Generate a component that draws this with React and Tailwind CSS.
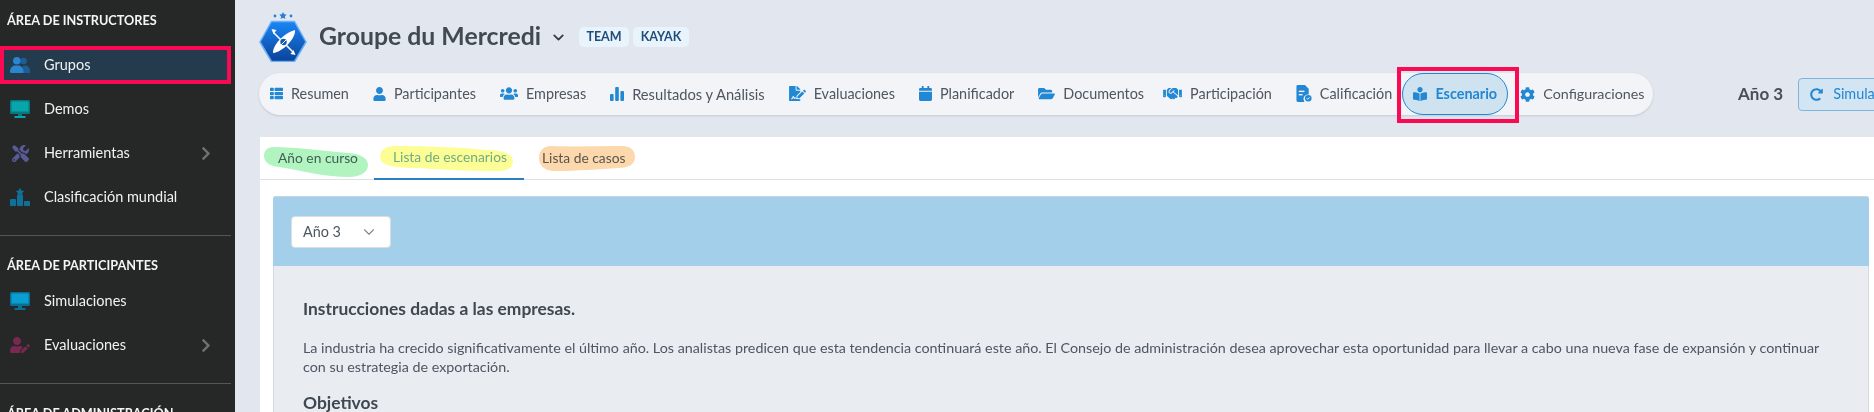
import React from "react";
import { FaTools, FaChevronRight, FaUserEdit, FaThList, FaUser, FaUsers, FaFileSignature, FaCalendar, FaFolderOpen, FaHandshake, FaBookReader, FaCog, FaRedoAlt } from "react-icons/fa";
import { ChevronDown } from "lucide-react";

function Ranking() {
  return (
    <svg viewBox="0 0 20 18" className="w-5 h-[18px]" fill="#0f7199">
      <rect x="0" y="11" width="6" height="7" rx="0.8" />
      <rect x="7" y="7" width="6" height="11" rx="0.8" />
      <rect x="14" y="13" width="6" height="5" rx="0.8" />
      <path d="M10 0l1.400 2.600 2.800.4-2 2 .5 2.800L10 6.500 7.300 7.800l.5-2.800-2-2 2.800-.4z" />
    </svg>
  );
}

function Duo() {
  return (
    <svg viewBox="0 0 20 16" className="w-5 h-4">
      <circle cx="13.500" cy="4" r="3.300" fill="#1d5f94" />
      <path d="M12 16v-4.500c0-1.500 1-3 3-3 3.200 0 5 2.500 5 5.500v2z" fill="#1d5f94" />
      <circle cx="6.800" cy="3.800" r="3.800" fill="#2a86cf" />
      <path d="M0 14.500C0 11 2.500 8.500 5 8.500h3.500c2.500 0 5 2.500 5 6V16H1.300C.5 16 0 15.400 0 14.500z" fill="#2a86cf" />
    </svg>
  );
}

function Monitor({ bezel, screen, stand }) {
  return (
    <svg viewBox="0 0 20 18" className="w-5 h-[18px]">
      <rect x="0" y="0" width="20" height="14" rx="1.500" fill={bezel} />
      <rect x="1.500" y="1.500" width="17" height="10" fill={screen} />
      <rect x="8" y="14" width="4" height="2" fill={bezel} />
      <rect x="4.500" y="16" width="11" height="2" fill={stand} />
    </svg>
  );
}

function Bars() {
  return (
    <svg viewBox="0 0 14 14" className="w-[14px] h-[14px]" fill="#2288d4">
      <rect x="0" y="7" width="3.600" height="7" rx="1" />
      <rect x="5.200" y="0" width="3.600" height="14" rx="1" />
      <rect x="10.400" y="4" width="3.600" height="10" rx="1" />
    </svg>
  );
}

function Grade() {
  return (
    <svg viewBox="0 0 16 18" className="w-4 h-[17px]">
      <path d="M1.500 0H9l4 4v6a5 5 0 0 0-4.600 8H1.500A1.500 1.500 0 0 1 0 16.500V1.500A1.500 1.500 0 0 1 1.500 0z" fill="#2288d4" />
      <rect x="2.500" y="6" width="6" height="1.500" fill="#f3f4f7" />
      <rect x="2.500" y="9.500" width="4" height="1.500" fill="#f3f4f7" />
      <circle cx="12.500" cy="14" r="3.500" fill="#2288d4" />
      <path d="M10.800 14l1.200 1.200 2-2.200" stroke="#f3f4f7" strokeWidth="1" fill="none" />
    </svg>
  );
}

function Logo() {
  return (
    <svg viewBox="0 0 48 50" className="w-12 h-[50px] shrink-0">
      <defs>
        <linearGradient id="hex" x1="0" y1="0" x2="0" y2="1">
          <stop offset="0" stopColor="#1b86f5" />
          <stop offset="1" stopColor="#0a4299" />
        </linearGradient>
      </defs>
      <path d="M24 0l1.200 2.300 2.500.3-1.800 1.800.4 2.500L24 5.700l-2.300 1.200.4-2.500-1.800-1.800 2.500-.3z" fill="#2a7fd6" />
      <circle cx="16" cy="4" r="1.400" fill="#2a7fd6" />
      <circle cx="32" cy="4" r="1.400" fill="#2a7fd6" />
      <path d="M12.500 9.500h23L47 30 35.500 49.500h-23L1 30z" fill="url(#hex)" stroke="#68b1f7" strokeWidth="1.500" strokeLinejoin="round" />
      <path d="M14 41c-.5-8 11-20 22-23 1 8-12 22-22 23z" fill="#ffffff" />
      <path d="M15 21l19 19" stroke="#ffffff" strokeWidth="1.600" strokeLinecap="round" />
      <path d="M12.500 17l5 1-3 4z M36.500 43l-5-1 3-4z" fill="#ffffff" />
      <circle cx="24.500" cy="30" r="3.200" fill="#0f5cb5" />
      <path d="M22 33l5-5" stroke="#ffffff" strokeWidth="1" />
    </svg>
  );
}

function SideRow({ icon, label, chevron }) {
  return (
    <div className="h-11 flex items-center pl-[10px] pr-[20px] w-[231px]">
      <span className="w-5 mr-[14px] flex justify-center">{icon}</span>
      <span className="flex-1 text-[14.500px] text-[#f1f1f1]">{label}</span>
      {chevron && <FaChevronRight className="text-[#6f7172] w-[10px] h-[15px]" />}
    </div>
  );
}

function Heading({ children, first }) {
  return (
    <div className={first ? "h-[43px] pt-[11px] pl-[7px] text-[12.700px] leading-[18px] font-bold text-[#f5f5f5] uppercase" : "h-[43px] pt-[20px] pl-[7px] text-[12.700px] leading-[18px] font-bold text-[#f5f5f5] uppercase whitespace-nowrap"}>
      {children}
    </div>
  );
}

function Sidebar() {
  return (
    <aside className="w-[235px] shrink-0 bg-[#262727] pr-1 h-[412px] overflow-hidden">
      <Heading first>Área de instructores</Heading>
      <div className="h-11 py-[3px]">
        <div className="h-[38px] border-4 border-[#fb0a54] bg-[#243a4d] flex items-center pl-[6px]">
          <span className="w-5 mr-[14px] flex justify-center"><Duo /></span>
          <span className="text-[14.500px] text-[#f1f1f1]">Grupos</span>
        </div>
      </div>
      <SideRow icon={<Monitor bezel="#07797e" screen="#08a5ab" stand="#08a5ab" />} label="Demos" />
      <SideRow icon={<FaTools className="text-[#5a5a96] w-[17px] h-[17px]" />} label="Herramientas" chevron />
      <SideRow icon={<Ranking />} label="Clasificación mundial" />
      <div className="mt-4 h-px bg-[#555656]" />
      <Heading>Área de participantes</Heading>
      <SideRow icon={<Monitor bezel="#0a6f94" screen="#0a9fd0" stand="#0a6f94" />} label="Simulaciones" />
      <SideRow icon={<FaUserEdit className="text-[#79294f] w-5 h-4" />} label="Evaluaciones" chevron />
      <div className="mt-4 h-px bg-[#555656]" />
      <Heading>Área de administración</Heading>
    </aside>
  );
}

const blue = "text-[#2288d4]";

function NavItem({ icon, label, itemClass }) {
  return (
    <div className={itemClass || "flex items-center gap-2 text-[14.400px] text-[#4e5662] whitespace-nowrap"}>
      {icon}
      <span>{label}</span>
    </div>
  );
}

function NavBar() {
  return (
    <div className="flex items-center shrink-0 h-[42px] w-[1394px] bg-[#f3f4f7] rounded-full shadow-sm pl-[11px] gap-[24px]">
      <NavItem icon={<FaThList className={`${blue} w-[13px] h-[13px]`} />} label="Resumen" />
      <NavItem icon={<FaUser className={`${blue} w-[13px] h-[14px]`} />} label="Participantes" />
      <NavItem icon={<FaUsers className={`${blue} w-[18px] h-[15px]`} />} label="Empresas" />
      <NavItem itemClass="flex items-center gap-2 text-[14.700px] text-[#4e5662] whitespace-nowrap" icon={<Bars />} label="Resultados y Análisis" />
      <NavItem icon={<FaFileSignature className={`${blue} w-[17px] h-[15px]`} />} label="Evaluaciones" />
      <NavItem icon={<FaCalendar className={`${blue} w-[13px] h-[15px]`} />} label="Planificador" />
      <NavItem icon={<FaFolderOpen className={`${blue} w-[17px] h-[15px]`} />} label="Documentos" />
      <NavItem itemClass="flex items-center gap-2 -ml-[5px] text-[14.400px] text-[#4e5662] whitespace-nowrap" icon={<FaHandshake className={`${blue} w-[19px] h-[15px]`} />} label="Participación" />
      <NavItem icon={<Grade />} label="Calificación" />
      <div className="relative -ml-[14px] -mr-[12px]">
        <div className="h-[42px] w-[106px] flex items-center justify-center gap-[8px] rounded-full border border-[#2288d4] bg-[#cfe2f0] text-[14.400px] font-bold text-[#2288d4]">
          <FaBookReader className="w-[14px] h-[14px]" />
          <span>Escenario</span>
        </div>
        <div className="absolute -left-[5px] -right-[11px] -top-[6px] -bottom-[8px] border-4 border-[#fb0a54]" />
      </div>
      <NavItem itemClass="flex items-center gap-2 text-[14.300px] text-[#4e5662] whitespace-nowrap" icon={<FaCog className={`${blue} w-[15px] h-[15px]`} />} label="Configuraciones" />
    </div>
  );
}

function Tab({ label, active, tabClass, children }) {
  return (
    <div className={tabClass}>
      <span className={active ? "text-[13.800px] text-[#6fb0e0] whitespace-nowrap" : "text-[13.800px] text-[#5b6470] whitespace-nowrap"}>{label}</span>
      {children}
    </div>
  );
}

function Panel() {
  return (
    <section className="mt-[22px] ml-[25px] bg-white h-[275px] overflow-hidden">
      <div className="flex h-[43px] border-b border-[#dde0e4]">
        <Tab label="Año en curso" tabClass="relative h-[43px] w-[114px] pl-[18px] flex items-center">
          <svg viewBox="0 0 104 30" className="absolute left-[4px] top-[10px] w-[104px] h-[30px] mix-blend-multiply">
            <path d="M10 0C30 0 60 4 85 6C98 7 104 12 104 18C104 26 95 30 85 30C60 30 40 24 15 20C4 19 0 14 0 9C0 3 4 0 10 0z" fill="#b2f4bf" />
          </svg>
        </Tab>
        <Tab active label="Lista de escenarios" tabClass="relative h-[43px] w-[150px] pl-[19px] flex items-center border-b-2 border-[#2a80bd]">
          <svg viewBox="0 0 133 25" className="absolute left-[6px] top-[9px] w-[133px] h-[25px] mix-blend-multiply">
            <path d="M14 0C40 0 80 1 105 4C125 4 133 8 133 16C133 22 127 25 118 25C90 25 60 24 40 22C15 22 0 20 0 11C0 4 6 0 14 0z" fill="#fdfd96" />
          </svg>
        </Tab>
        <Tab label="Lista de casos" tabClass="relative h-[43px] pl-[18px] flex items-center">
          <svg viewBox="0 0 96 25" className="absolute left-[15px] top-[9px] w-[96px] h-[25px] mix-blend-multiply">
            <path d="M12 0C40 1 60 0 84 0C92 0 96 5 96 11C96 18 90 22 80 22C60 23 40 25 16 25C5 25 0 19 0 12C0 5 4 0 12 0z" fill="#fdd8ad" />
          </svg>
        </Tab>
      </div>
      <div className="mt-4 ml-[13px] w-[1596px] rounded-t-[3px] bg-[#e9ecf1] border-x border-[#d5dae0] h-[220px]">
        <div className="h-[70px] bg-[#a3cfeb] -mx-px px-[18px] flex items-center rounded-t-[3px] border-t border-[#c5d5e0]">
          <div className="w-[100px] h-[32px] bg-white rounded-[4px] border border-[#d9dde2] flex items-center justify-between pl-[11px] pr-[12px] text-[14.400px] text-[#4e5662]">
            <span>Año 3</span>
            <ChevronDown className="w-[18px] h-[18px] text-[#7d8894]" strokeWidth={1.500} />
          </div>
        </div>
        <div className="pl-[29px] pr-[30px]">
          <h3 className="mt-[33px] text-[17.400px] leading-5 font-bold text-[#3f4750]">Instrucciones dadas a las empresas.</h3>
          <p className="mt-[19px] text-[14.300px] leading-[19px] text-[#4e5662]">
            La industria ha crecido significativamente el último año. Los analistas predicen que esta tendencia continuará este año. El Consejo de administración desea aprovechar esta oportunidad para llevar a cabo una nueva fase de expansión y continuar con su estrategia de exportación.
          </p>
          <h3 className="mt-[17px] text-[17.400px] leading-5 font-bold text-[#3f4750]">Objetivos</h3>
        </div>
      </div>
    </section>
  );
}

export default function App() {
  return (
    <div className="flex w-[1874px] h-[412px] overflow-hidden bg-[#e2e7ef] font-['Lato',sans-serif]">
      <Sidebar />
      <main className="flex-1 min-w-0 overflow-hidden">
        <div className="flex items-center h-[50px] mt-3 ml-6">
          <Logo />
          <h1 className="ml-[12px] -mt-[2px] text-[24.800px] font-bold text-[#414952] whitespace-nowrap">Groupe du Mercredi</h1>
          <ChevronDown className="ml-[9px] w-[17px] h-[17px] text-[#343a40]" strokeWidth={2.500} />
          <span className="ml-[12px] h-5 w-[50px] flex items-center justify-center rounded-[5px] bg-[#e8f3fb] text-[12.500px] font-bold text-[#1f4e79]">TEAM</span>
          <span className="ml-1 h-5 w-[56px] flex items-center justify-center rounded-[5px] bg-[#e8f3fb] text-[12.500px] font-bold text-[#1f4e79]">KAYAK</span>
        </div>
        <div className="flex items-center ml-6 mt-[11px] h-[42px]">
          <NavBar />
          <span className="ml-[85px] text-[17px] font-bold text-[#4a4f55] whitespace-nowrap">Año 3</span>
          <div className="ml-[15px] h-[33px] w-[140px] shrink-0 flex items-center gap-[10px] pl-[11px] rounded-[4px] border border-[#7db5dd] bg-[#d3e5f3] text-[14.400px] text-[#2288d4] whitespace-nowrap">
            <FaRedoAlt className="w-[13px] h-[13px]" />
            <span>Simular año</span>
          </div>
        </div>
        <Panel />
      </main>
    </div>
  );
}
